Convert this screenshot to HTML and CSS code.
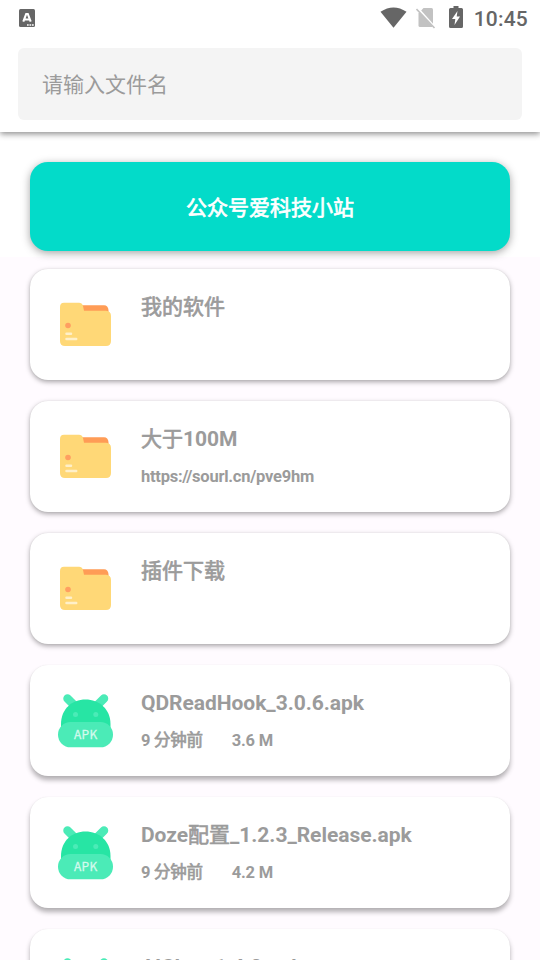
FILE: index.html
```html
<!DOCTYPE html>
<html lang="zh-CN">
<head>
<meta charset="utf-8">
<title>文件列表</title>
<link rel="stylesheet" href="styles.css">
</head>
<body>
<svg class="defs" width="0" height="0" aria-hidden="true">
  <symbol id="folder" viewBox="0 0 52 44">
    <path d="M20 3.200H44Q48 3.200 48.500 8V16H20Z" fill="#ff9c56"/>
    <path d="M4 0.700H19Q22 .7 23 4L24 8.700H46Q51 9 51 14V39Q51 44 46 44H5Q0 44 0 39V5Q0 .7 4 .7Z" fill="#ffd877"/>
    <circle cx="8" cy="23.500" r="2.800" fill="#ff9f61"/>
    <path d="M6.500 31.700H11M6.500 37H16.200" stroke="#fff0c9" stroke-width="2.500" stroke-linecap="round"/>
  </symbol>
  <symbol id="apk" viewBox="0 0 56 56">
    <path d="M9.500 5.500L18 14M46 5.500L37.500 14" stroke="#4bebb7" stroke-width="8.500" stroke-linecap="round"/>
    <path d="M3 38V31C3 16 14 6.500 27.500 6.500S52.500 16 52.500 31V38Z" fill="#27e5a4"/>
    <circle cx="17.500" cy="21.500" r="2.500" fill="#4bebb7"/>
    <circle cx="37.800" cy="21.500" r="2.500" fill="#4bebb7"/>
    <rect x="0" y="29" width="55" height="25.300" rx="12.500" fill="#4bebb7"/>
    <text x="27.700" y="46.200" text-anchor="middle" class="apk-label">APK</text>
  </symbol>
</svg>
<header class="appbar">
  <div class="status">
    <svg width="16" height="18" viewBox="0 0 16 18"><rect width="16" height="18" rx="1.500" fill="#666"/><path d="M4.300 12.700L7.200 5H8.800L11.700 12.700M5.500 10.500H10.500" fill="none" stroke="#fff" stroke-width="2.100"/><path d="M8 16H15" stroke="#fff" stroke-width="1.400" stroke-dasharray="1.700 .8"/></svg>
    <div class="status-right">
      <svg class="wifi" width="27" height="21" viewBox="0 0 27 21"><path d="M.5 4.800Q13.500-4 26.500 4.800L13.500 20.700Z" fill="#666"/></svg>
      <svg class="sim" width="20" height="22" viewBox="0 0 20 22"><path d="M7.500 1H15.500Q17 1 17 2.500V18.500Q17 20 15.500 20H4Q2.500 20 2.500 18.500V6.500Z" fill="#c2c2c2"/><path d="M1.500 1L19.500 21" stroke="#fff" stroke-width="2"/><path d="M.5 2L18.500 21" stroke="#c2c2c2" stroke-width="1.600"/></svg>
      <svg class="battery" width="14" height="22" viewBox="0 0 14 22"><path d="M4.500 0H9.500V2H12.500Q14 2 14 3.500V20.500Q14 22 12.500 22H1.500Q0 22 0 20.500V3.500Q0 2 1.500 2H4.500Z" fill="#666"/><path d="M8.500 5L3 13H6.300L5.500 19L11 10.500H7.700Z" fill="#fff"/></svg>
      <span class="clock">10:45</span>
    </div>
  </div>
  <div class="search">请输入文件名</div>
</header>
<main class="content">
  <div class="banner">公众号爱科技小站</div>
  <div class="list">
    <article class="card"><svg class="folder"><use href="#folder"/></svg><div class="info"><h2><span class="han">我的软件</span></h2></div></article>
    <article class="card"><svg class="folder"><use href="#folder"/></svg><div class="info"><h2><span class="han">大于</span>100M</h2><p class="url">https://sourl.cn/pve9hm</p></div></article>
    <article class="card"><svg class="folder"><use href="#folder"/></svg><div class="info"><h2><span class="han">插件下载</span></h2></div></article>
    <article class="card low"><svg class="apk"><use href="#apk"/></svg><div class="info"><h2>QDReadHook_3.0.6.apk</h2><p><span>9 <span class="han">分钟前</span></span><span>3.6 M</span></p></div></article>
    <article class="card low"><svg class="apk"><use href="#apk"/></svg><div class="info"><h2>Doze<span class="han">配置</span>_1.2.3_Release.apk</h2><p><span>9 <span class="han">分钟前</span></span><span>4.2 M</span></p></div></article>
    <article class="card low"><svg class="apk"><use href="#apk"/></svg><div class="info"><h2>AIChat_1.4.0.apk</h2></div></article>
  </div>
</main>
</body>
</html>
```
FILE: styles.css
```css
* { box-sizing: border-box; }
body {
  margin: 0;
  height: 960px;
  overflow: hidden;
  display: flex;
  flex-direction: column;
  background: #fffbff;
  font-family: Roboto, "Noto Sans CJK SC", sans-serif;
  color: #9b9b9b;
}
.defs { position: absolute; }
.appbar {
  position: relative;
  flex: none;
  height: 132px;
  padding: 0 18px;
  background: #fff;
  box-shadow: 0 2px 6px rgba(0, 0, 0, .45);
}
.status {
  height: 48px;
  padding: 9px 0 0 1px;
  display: flex;
  justify-content: space-between;
  align-items: flex-start;
}
.status-right { display: flex; margin-top: -3px; margin-right: -6px; }
.wifi { margin-top: 1px; }
.sim { margin: 1px 0 0 9px; }
.battery { margin-left: 13px; }
.clock {
  margin-left: 11px;
  font-size: 21px;
  line-height: 26px;
  font-weight: 500;
  letter-spacing: .2px;
  color: #666;
}
.search {
  height: 72px;
  padding: 1px 0 0 24px;
  border-radius: 6px;
  background: #f4f4f4;
  font-size: 21px;
  line-height: 72px;
}
.content {
  flex: 1;
  min-height: 0;
  overflow: hidden;
  background: linear-gradient(#fff 125px, #fffbff 125px);
}
.banner {
  margin: 30px 30px 0;
  height: 89px;
  padding-top: 2px;
  border-radius: 18px;
  background: #03dbc9;
  box-shadow: 0 2px 8px rgba(0, 0, 0, .36);
  color: #fff;
  font-size: 21px;
  line-height: 89px;
  text-align: center;
  -webkit-text-stroke: .7px #fff;
}
.list {
  padding: 18px 30px 0;
  display: flex;
  flex-direction: column;
  gap: 21px;
}
.card {
  flex: none;
  height: 111px;
  padding-left: 28px;
  border-radius: 18px;
  background: #fff;
  box-shadow: 0 2px 5px rgba(0, 0, 0, .34), 0 0 1px rgba(0, 0, 0, .12);
  display: flex;
}
.low { box-shadow: 0 4px 5px rgba(0, 0, 0, .3), 0 0 1px rgba(0, 0, 0, .1); }
.folder { flex: none; width: 52px; height: 44px; margin: 33px 29px 0 2px; }
.apk { flex: none; width: 56px; height: 56px; margin: 28px 27px 0 0; }
.apk-label {
  font: 400 12px "Noto Sans CJK SC", sans-serif;
  letter-spacing: .3px;
  fill: #d3faed;
  stroke: #d3faed;
  stroke-width: .3px;
}
.han { font-weight: 400; -webkit-text-stroke: .7px currentColor; }
h2 {
  margin: 22px 0 0;
  font-size: 21px;
  line-height: 32px;
  font-weight: 700;
  letter-spacing: -.04px;
  white-space: nowrap;
}
p {
  margin: 9px 0 0;
  display: flex;
  gap: 29px;
  font-size: 16.5px;
  line-height: 26px;
  font-weight: 700;
  letter-spacing: -.25px;
}
```
